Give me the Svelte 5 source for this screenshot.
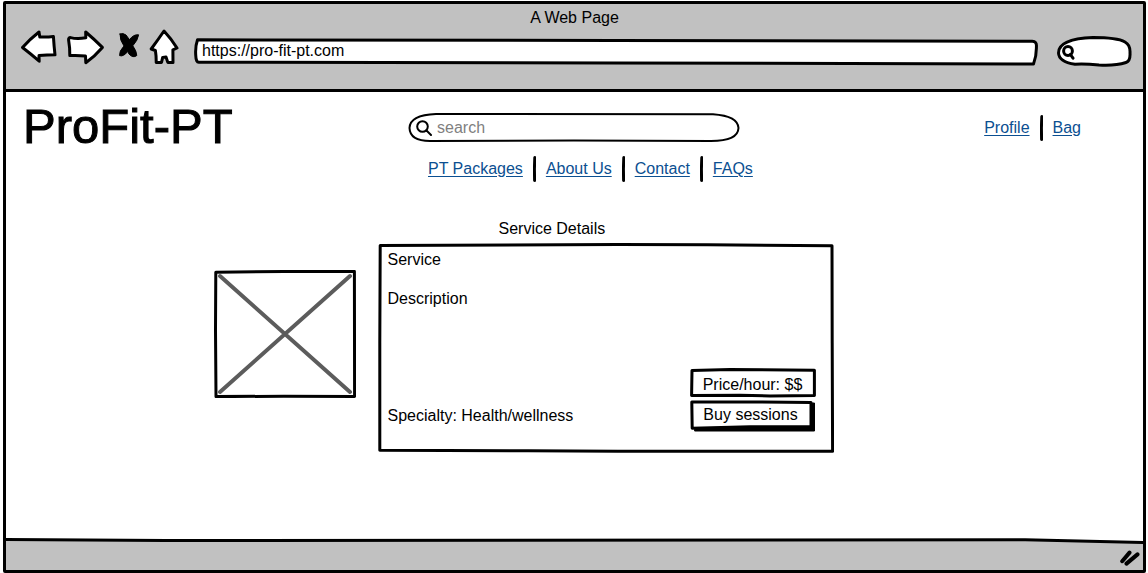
<script>
  let query = $state('');
  let address = $state('https://pro-fit-pt.com');

  const sections = ['PT Packages', 'About Us', 'Contact', 'FAQs'];
  const account = ['Profile', 'Bag'];
</script>

{#snippet frame(width, height, path, stroke = 3)}
  <svg class="frame" viewBox="0 0 {width} {height}" preserveAspectRatio="none" aria-hidden="true">
    <path d={path} stroke-width={stroke} vector-effect="non-scaling-stroke" />
  </svg>
{/snippet}

{#snippet links(items)}
  {#each items as item, i}
    {#if i > 0}
      <svg class="divider" viewBox="0 0 3 26" aria-hidden="true"><path d="M1.8 1.5 L1.4 13 L1.6 24.5" /></svg>
    {/if}
    <a href="#{item.toLowerCase().replace(' ', '-')}">{item}</a>
  {/each}
{/snippet}

<div class="window">
  <header class="chrome">
    <div class="caption">A Web Page</div>
    <div class="toolbar">
      <div class="buttons">
        <button aria-label="Back">
          <svg width="38" height="38" viewBox="20 28 38 38"><path d="M22.5 46.5 Q30 38 39 31 L39.8 36 Q47 36.4 53.4 35.4 Q54 45 55 53.8 Q47 53.8 39 54.6 L39.2 60.2 Q31 53 22.5 46.5Z" /></svg>
        </button>
        <button aria-label="Forward">
          <svg width="40" height="38" viewBox="65 28 40 38"><path d="M102.4 46.4 Q94 38 85.7 31 L85.8 36.8 Q77 38.4 70.5 36.6 Q68.4 36.6 68.6 39 Q70 47 69.8 54.6 Q78 54.2 85.5 55 L85.8 61.8 Q95 55 102.4 46.4Z" /></svg>
        </button>
        <button class="stop" aria-label="Stop">
          <svg width="24" height="38" viewBox="116 28 24 38"><path class="solid" d="M120 33 Q123 31.5 126 34 L129.4 38.6 Q134 33 138.6 33.8 Q138 39 132.8 44.8 Q136.6 50 136.8 54.5 Q133 57.5 129 53 L127.7 50.5 Q123.5 56 119.6 54.6 Q119 50 124 45 Q119.6 39 120 33Z" /></svg>
        </button>
        <button class="home" aria-label="Home">
          <svg width="30" height="38" viewBox="149 28 30 38"><path d="M164 30 Q158.5 38 151.2 48 L155.4 49.5 Q156.3 55 156.2 61.5 L161.5 61.4 L162.7 56.4 L166 56 L167.8 61.4 L173 61.4 L172.9 48.8 L177 47 Q171.5 38 164 30Z" /></svg>
        </button>
      </div>
      <label class="address">
        {@render frame(845, 28, 'M3.5 1.8 L420 2.4 L839 3.2 Q844 3 843.4 9 Q843.6 18 840.5 26 L420 25 L5 24.2 Q2 24.5 1.8 18 Q1 9 3.5 1.8Z')}
        <input aria-label="Address" type="url" bind:value={address} />
      </label>
      <button class="find" aria-label="Search the web">
        {@render frame(75, 31, 'M1.5 17 Q1.5 3 36 1.6 Q60 1.6 68 6 Q73.5 9 73 17 Q73.5 25 69 26.5 Q58 30 42 29 Q28 27.6 18 28.2 Q2 26 1.5 17Z')}
        <svg width="14" height="16" viewBox="0 0 14 16"><circle cx="7" cy="7" r="4.4" /><path d="M9.4 10.5 L12 14.2" /></svg>
      </button>
    </div>
  </header>

  <main>
    <div class="masthead">
      <h1>ProFit-PT</h1>
      <div class="middle">
        <label class="search">
          {@render frame(332, 31, 'M1.5 16 Q2 3 28 2 L305 2.2 Q330 4 330.5 16 Q330 29 303 29 L166 28.6 L22 29 Q2 29 1.5 16Z', 2)}
          <svg class="lens" width="16" height="16" viewBox="0 0 16 16"><circle cx="6.5" cy="6.5" r="5.3" /><path d="M10.5 10.5 L15 15" /></svg>
          <input aria-label="Search services" type="search" placeholder="search" bind:value={query} />
        </label>
        <nav class="sections" aria-label="Sections">{@render links(sections)}</nav>
      </div>
      <nav class="account" aria-label="Account">{@render links(account)}</nav>
    </div>

    <section class="service">
      <h2>Service Details</h2>
      <div class="photo" role="img" aria-label="Service photo">
        {@render frame(142, 128, 'M1.8 2.2 L70 1.6 L140.4 1.4 L140.6 126.4 L70 126.2 L2 126.6 L1.5 60Z')}
        <svg class="cross" viewBox="0 0 142 128" preserveAspectRatio="none"><path d="M6 6 L136 122 M136 6 L6 122" /></svg>
      </div>
      <article class="card">
        {@render frame(456, 210, 'M2.2 2.4 L240 1.6 L330 1.8 L454 2.8 L454.2 100 L454.6 208.2 L240 208.2 L150 207.8 L1.8 207.2 L1.8 100Z')}
        <h3>Service</h3>
        <p>Description</p>
        <div class="foot">
          <p>Specialty: Health/wellness</p>
          <div class="purchase">
            <div class="price">
              {@render frame(126, 30, 'M2 2.4 L40 1.6 L124.4 2.2 L124.4 27.6 L80 28 L50 27.2 L1.6 27.4Z')}
              <span>Price/hour: $$</span>
            </div>
            <button class="buy">
              <svg class="frame" viewBox="0 0 126 32" preserveAspectRatio="none" aria-hidden="true">
                <path class="shade" d="M6 5 L124.5 3 L124.5 31 L5 31Z" />
                <path d="M1.8 2 L60 2 L121 2.4 L121 26.4 L60 26.8 L2.2 28.2Z" stroke-width="3" />
              </svg>
              <span>Buy sessions</span>
            </button>
          </div>
        </div>
      </article>
    </section>
  </main>

  <footer>
    <svg class="rule" viewBox="0 0 1138 6" preserveAspectRatio="none" aria-hidden="true">
      <path class="above" d="M0 0 H1138 V4 L1020 2 H0Z" />
      <path d="M0 1.6 L160 2.6 L1020 1.8 L1138 4.4" stroke-width="3" vector-effect="non-scaling-stroke" />
    </svg>
    <svg class="grip" width="20" height="16" viewBox="0 0 20 16" aria-hidden="true"><path d="M2.2 11.2 L9.5 2.6 M6.5 13.6 L17.5 4.4" /></svg>
  </footer>
</div>

<style>
  :global(body) {
    margin: 0;
    background: #fff;
  }

  .window {
    box-sizing: border-box;
    min-height: calc(100vh - 1px);
    margin: 1px 2px 0 3px;
    border: 3px solid #000;
    border-radius: 2px;
    display: flex;
    flex-direction: column;
    background: #fff;
    color: #000;
    font: 16px/20px "Liberation Sans", Arial, sans-serif;
  }

  h1, h2, h3, p {
    margin: 0;
    font-size: inherit;
    font-weight: normal;
  }

  button {
    position: relative;
    padding: 0;
    border: 0;
    background: none;
    color: inherit;
    font: inherit;
    cursor: pointer;
  }

  input {
    position: relative;
    min-width: 0;
    flex: 1;
    padding: 0;
    border: 0;
    outline: 0;
    background: none;
    color: inherit;
    font: inherit;
  }

  svg {
    display: block;
    fill: none;
    stroke: #000;
    stroke-width: 3;
    stroke-linecap: round;
    stroke-linejoin: round;
  }

  .frame {
    position: absolute;
    inset: 0;
    width: 100%;
    height: 100%;
    fill: #fff;
  }

  .chrome {
    padding: 4px 14px 22px;
    border-bottom: 3px solid #000;
    background: #c1c1c1;
  }

  .caption {
    text-align: center;
  }

  .toolbar {
    display: flex;
    align-items: center;
  }

  .buttons {
    display: flex;
  }

  .buttons svg {
    fill: #fff;
  }

  .buttons button + button {
    margin-left: 7px;
  }

  .buttons .stop {
    margin-left: 11px;
  }

  .buttons .home {
    margin-left: 9px;
  }

  .buttons .solid {
    fill: #000;
    stroke-width: 1;
  }

  .address {
    position: relative;
    display: flex;
    flex: 1;
    height: 28px;
    margin: 9px 19px 0 15px;
    padding: 0 8px;
    box-sizing: border-box;
  }

  .address input {
    height: 25px;
  }

  .find {
    width: 75px;
    height: 31px;
    margin-top: 8px;
    padding-left: 4px;
    margin-right: -3px;
  }

  .find svg:last-child {
    position: relative;
  }

  main {
    flex: 1;
  }

  .masthead {
    display: grid;
    grid-template-columns: 1fr 332px 1fr;
    padding: 0 18px 0 17px;
  }

  h1 {
    padding-top: 6px;
    font-size: 49px;
    line-height: 56px;
    -webkit-text-stroke: 1px #000;
  }

  .search {
    position: relative;
    display: flex;
    align-items: center;
    gap: 5px;
    height: 31px;
    margin-top: 20px;
    padding: 0 16px 0 8px;
    box-sizing: border-box;
  }

  .lens {
    position: relative;
    stroke-width: 2;
  }

  .search input::placeholder {
    color: #808080;
    opacity: 1;
  }

  nav {
    display: flex;
    align-items: center;
    gap: 10px;
    height: 26px;
    white-space: nowrap;
  }

  .sections {
    width: max-content;
    margin: 13px 0 0 20px;
  }

  .account {
    justify-content: flex-end;
    margin: 23px 44px 0 0;
  }

  .divider {
    flex: none;
    width: 3px;
    height: 26px;
  }

  a {
    color: #0b4f91;
    text-underline-offset: 2px;
  }

  .service {
    display: grid;
    grid-template-columns: 142px 456px;
    justify-content: center;
    column-gap: 22px;
    padding: 37px 102px 24px 0;
  }

  h2 {
    grid-column: 2;
    padding: 0 0 4px 121px;
  }

  .photo {
    position: relative;
    height: 128px;
    margin-top: 27px;
  }

  .cross {
    position: relative;
    width: 100%;
    height: 100%;
    stroke: #5c5c5c;
    stroke-width: 4;
  }

  .card {
    position: relative;
    padding: 7px 18px 21px 10px;
  }

  .card h3, .card p, .price span, .buy span {
    position: relative;
  }

  h3 {
    margin-bottom: 19px;
  }

  .foot {
    display: flex;
    justify-content: space-between;
    align-items: flex-end;
    margin-top: 59px;
  }

  .foot p {
    padding-bottom: 6px;
  }

  .purchase {
    display: grid;
    gap: 2px;
    width: 126px;
    text-align: center;
  }

  .price {
    position: relative;
    padding: 7px 0 3px;
  }

  .buy {
    height: 32px;
    padding: 0 4px 3px 0;
  }

  .shade {
    fill: #000;
    stroke-width: 1;
  }

  footer {
    display: flex;
    justify-content: space-between;
    height: 32px;
    background: #c1c1c1;
    position: relative;
  }

  .rule {
    flex: 1;
    height: 6px;
    min-width: 0;
  }

  .above {
    fill: #fff;
    stroke: none;
  }

  .grip {
    position: absolute;
    right: 3px;
    bottom: 4px;
    stroke-width: 4;
  }
</style>
